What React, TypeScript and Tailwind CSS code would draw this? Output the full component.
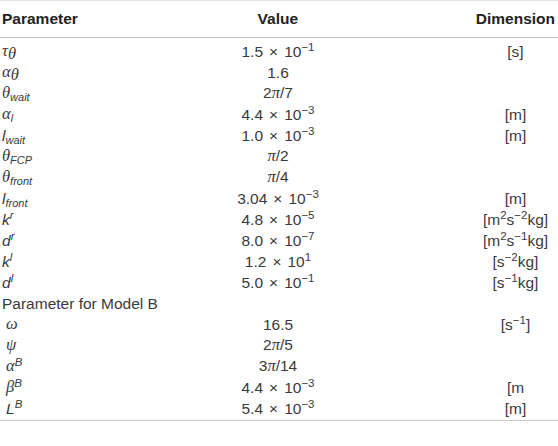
import type { ReactNode } from "react";

type Row = {
  param: ReactNode;
  value?: ReactNode;
  dim?: ReactNode;
  indent?: boolean;
  section?: boolean;
};

// serif italic for greek letters and pi, sans italic for latin symbols
const G = ({ children }: { children: ReactNode }) => (
  <span className="font-['Liberation_Serif',serif] text-[16.5px] italic">{children}</span>
);
const I = ({ children }: { children: ReactNode }) => <span className="italic">{children}</span>;
const Sub = ({ children }: { children: ReactNode }) => <sub className="text-[11px]">{children}</sub>;
const Sup = ({ children }: { children: ReactNode }) => <sup className="text-[11.5px]">{children}</sup>;

const sci = (m: string, e: string) => (
  <>
    {m}
    <span className="mx-[6px]">×</span>10<Sup>{e}</Sup>
  </>
);

const rows: Row[] = [
  { param: <><G>τ</G><Sub><G>θ</G></Sub></>, value: sci("1.5", "−1"), dim: "[s]" },
  { param: <><G>α</G><Sub><G>θ</G></Sub></>, value: "1.6" },
  { param: <><G>θ</G><Sub><I>wait</I></Sub></>, value: <>2<G>π</G>/7</> },
  { param: <><G>α</G><Sub><I>l</I></Sub></>, value: sci("4.4", "−3"), dim: "[m]" },
  { param: <><I>l</I><Sub><I>wait</I></Sub></>, value: sci("1.0", "−3"), dim: "[m]" },
  { param: <><G>θ</G><Sub><I>FCP</I></Sub></>, value: <><G>π</G>/2</> },
  { param: <><G>θ</G><Sub><I>front</I></Sub></>, value: <><G>π</G>/4</> },
  { param: <><I>l</I><Sub><I>front</I></Sub></>, value: sci("3.04", "−3"), dim: "[m]" },
  { param: <><I>k</I><Sup><I>r</I></Sup></>, value: sci("4.8", "−5"), dim: <>[m<Sup>2</Sup>s<Sup>−2</Sup>kg]</> },
  { param: <><I>d</I><Sup><I>r</I></Sup></>, value: sci("8.0", "−7"), dim: <>[m<Sup>2</Sup>s<Sup>−1</Sup>kg]</> },
  { param: <><I>k</I><Sup><I>l</I></Sup></>, value: sci("1.2", "1"), dim: <>[s<Sup>−2</Sup>kg]</> },
  { param: <><I>d</I><Sup><I>l</I></Sup></>, value: sci("5.0", "−1"), dim: <>[s<Sup>−1</Sup>kg]</> },
  { param: "Parameter for Model B", section: true },
  { param: <G>ω</G>, value: "16.5", dim: <>[s<Sup>−1</Sup>]</>, indent: true },
  { param: <G>ψ</G>, value: <>2<G>π</G>/5</>, indent: true },
  { param: <><G>α</G><Sup><I>B</I></Sup></>, value: <>3<G>π</G>/14</>, indent: true },
  { param: <><G>β</G><Sup><I>B</I></Sup></>, value: sci("4.4", "−3"), dim: "[m", indent: true },
  { param: <><I>L</I><Sup><I>B</I></Sup></>, value: sci("5.4", "−3"), dim: "[m]", indent: true },
];

export default function App() {
  return (
    <div className="h-[446px] w-[558px] bg-white font-['Liberation_Sans',Arial,sans-serif] text-[15.5px] text-[#3a3a3a]">
      <div className="border-t border-[#e4e4e4]">
        <div className="flex h-[37px] items-center border-b border-[#bcbcbc] text-[15.5px] font-bold text-[#222]">
          <div className="w-[80px] pl-[2px]">Parameter</div>
          <div className="w-[396px] text-center">Value</div>
          <div className="flex-1 pr-[3px] text-center">Dimension</div>
        </div>
        <div className="border-b border-[#c8c8c8] pt-[3px] pb-[1px]">
          {rows.map((row, i) =>
            row.section ? (
              <div key={i} className="flex h-[21px] items-center pl-[2px] leading-none">
                {row.param}
              </div>
            ) : (
              <div key={i} className="flex h-[21px] items-center leading-none">
                <div className={`w-[80px] whitespace-nowrap ${row.indent ? "pl-[6px]" : "pl-[2px]"}`}>
                  {row.param}
                </div>
                <div className="w-[396px] text-center whitespace-nowrap">{row.value}</div>
                <div className="flex-1 pr-[3px] text-center whitespace-nowrap">{row.dim}</div>
              </div>
            ),
          )}
        </div>
      </div>
    </div>
  );
}
